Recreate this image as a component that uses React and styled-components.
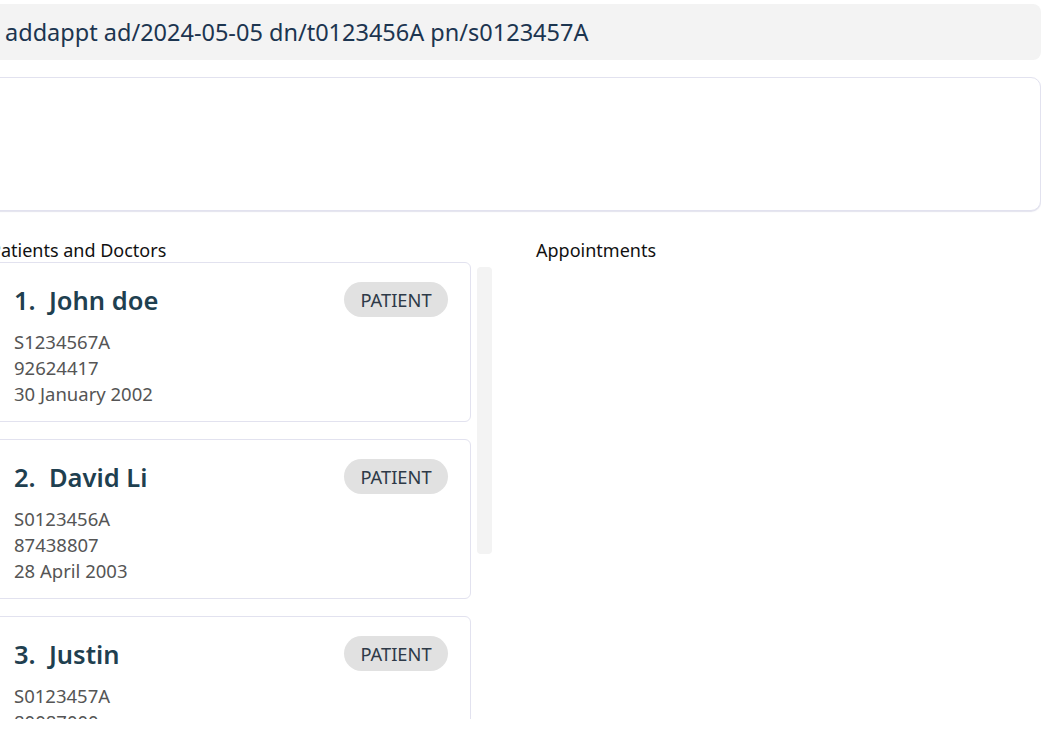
import React from 'react';
import styled, { createGlobalStyle } from 'styled-components';

const GlobalStyle = createGlobalStyle`
  html, body {
    margin: 0;
    padding: 0;
    background: #ffffff;
    overflow: hidden;
  }
  body {
    font-family: "Noto Sans", "Open Sans", sans-serif;
  }
`

const Page = styled.div`
  width: 1061px;
  margin-left: -20px;
  height: 730px;
  overflow: hidden;
`

const CommandBar = styled.div`
  margin-top: 4px;
  height: 56px;
  background: #f3f3f3;
  border-radius: 8px;
  display: flex;
  align-items: center;
  padding-left: 25px;
  font-size: 23.5px;
  color: #1c3550;
`

const ResultBox = styled.div`
  margin-top: 17px;
  height: 132px;
  border: 1px solid #e2e2ef;
  border-radius: 10px;
  box-shadow: 0 1px 1px rgba(200, 200, 220, 0.5);
  background: #fff;
`

const Panels = styled.div`
  margin-top: 28px;
  display: grid;
  grid-template-columns: 512px 1fr;
  gap: 44px;
`

const PanelLabel = styled.div`
  height: 23px;
  line-height: 23px;
  font-size: 18px;
  color: #111;
  padding-left: ${props => props.indent || 0}px;
`

const ListArea = styled.div`
  display: flex;
  align-items: flex-start;
  height: 457px;
  overflow: hidden;
`

const CardColumn = styled.div`
  width: 491px;
  display: flex;
  flex-direction: column;
  gap: 17px;
`

const Card = styled.div`
  box-sizing: border-box;
  height: 160px;
  flex-shrink: 0;
  border: 1px solid #e2e2ef;
  border-radius: 6px;
  padding: 19px 22px 0 33px;
  background: #fff;
`

const CardHeader = styled.div`
  display: flex;
  justify-content: space-between;
  align-items: center;
  height: 35px;
`

const Name = styled.div`
  font-size: 25.5px;
  font-weight: 600;
  color: #1f4050;
`

const Badge = styled.span`
  box-sizing: border-box;
  width: 104px;
  height: 35px;
  border-radius: 18px;
  background: #e1e1e1;
  color: #2e3a48;
  font-size: 18.3px;
  display: flex;
  align-items: center;
  justify-content: center;
`

const Details = styled.div`
  margin-top: 12px;
  font-size: 18.5px;
  line-height: 26px;
  color: #555;
`

const ScrollThumb = styled.div`
  margin-left: 6px;
  margin-top: 5px;
  width: 15px;
  height: 287px;
  border-radius: 4px;
  background: #f3f3f3;
`

const people = [
  { name: 'John doe', id: 'S1234567A', phone: '92624417', dob: '30 January 2002' },
  { name: 'David Li', id: 'S0123456A', phone: '87438807', dob: '28 April 2003' },
  { name: 'Justin', id: 'S0123457A', phone: '80087000', dob: '1 January 2000' },
];

const App = () => {
  return <>
    <GlobalStyle />
    <Page>
      <CommandBar>addappt ad/2024-05-05 dn/t0123456A pn/s0123457A</CommandBar>
      <ResultBox />
      <Panels>
        <div>
          <PanelLabel indent={10}>Patients and Doctors</PanelLabel>
          <ListArea>
            <CardColumn>
              {people.map((p, i) => (
                <Card key={p.id}>
                  <CardHeader>
                    <Name>{i + 1}.&nbsp; {p.name}</Name>
                    <Badge>PATIENT</Badge>
                  </CardHeader>
                  <Details>
                    <div>{p.id}</div>
                    <div>{p.phone}</div>
                    <div>{p.dob}</div>
                  </Details>
                </Card>
              ))}
            </CardColumn>
            <ScrollThumb />
          </ListArea>
        </div>
        <div>
          <PanelLabel>Appointments</PanelLabel>
        </div>
      </Panels>
    </Page>
  </>
}

export default App;
